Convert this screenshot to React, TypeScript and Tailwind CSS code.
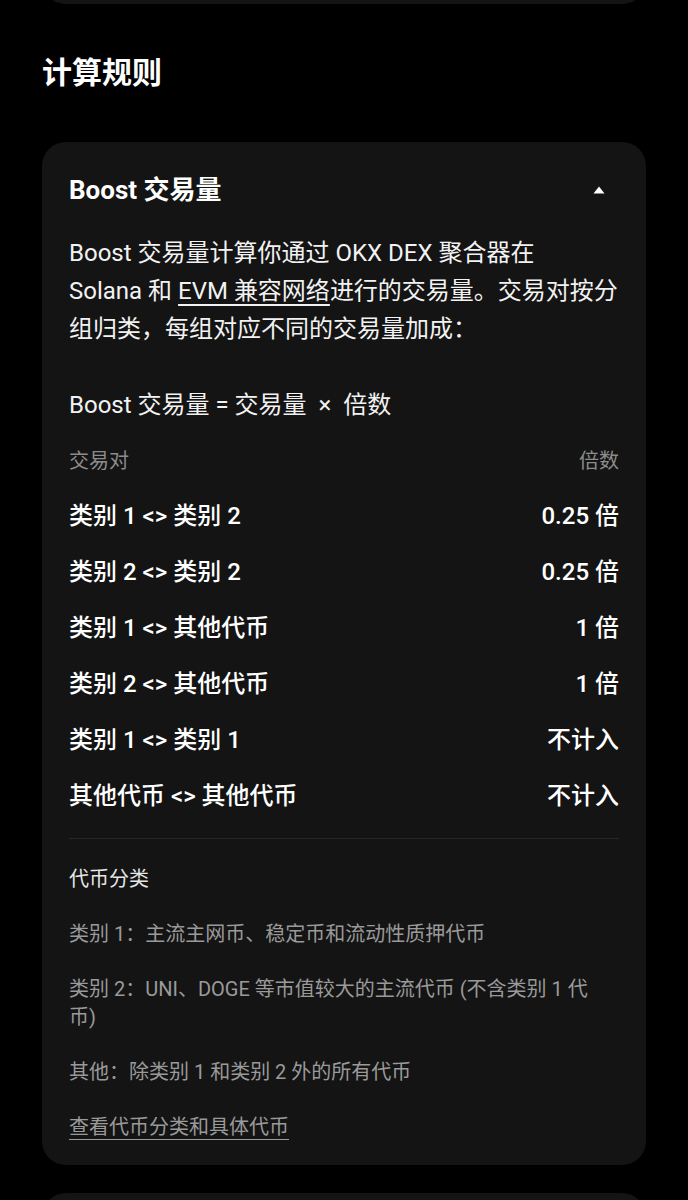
import React from "react";

const rows: [string, string][] = [
  ["类别 1 <> 类别 2", "0.25 倍"],
  ["类别 2 <> 类别 2", "0.25 倍"],
  ["类别 1 <> 其他代币", "1 倍"],
  ["类别 2 <> 其他代币", "1 倍"],
  ["类别 1 <> 类别 1", "不计入"],
  ["其他代币 <> 其他代币", "不计入"],
];

export default function App() {
  return (
    <div
      className="min-h-[1200px] w-[688px] bg-black text-white overflow-hidden"
      style={{ fontFamily: 'Roboto, "Noto Sans CJK SC", sans-serif' }}
    >
      <div className="mx-[42px] -mt-[40px] h-[44px] rounded-b-[24px] bg-[#141414]" />
      <h2 className="mx-[42px] mt-[49px] text-[30px] font-bold leading-[40px]">计算规则</h2>
      <div className="mx-[42px] mt-[49px] rounded-[24px] bg-[#141414] px-[27px] pt-[30px] pb-[24px]">
        <div className="flex items-center justify-between h-[36px]">
          <div className="text-[26px] font-bold leading-[36px]">Boost 交易量</div>
          <svg width="12" height="8" viewBox="0 0 12 8" className="mr-[14px]">
            <path d="M6 0.5 L11.5 7.5 L0.5 7.5 Z" fill="#ffffff" />
          </svg>
        </div>
        <p className="mt-[26px] text-[24px] leading-[38px] text-[#f2f2f2]">
          Boost 交易量计算你通过 OKX DEX 聚合器在
          <br />
          Solana 和{" "}
          <span className="underline decoration-[1.5px] underline-offset-[5px]">EVM 兼容网络</span>
          进行的交易量。交易对按分
          <br />
          组归类，每组对应不同的交易量加成：
        </p>
        <p className="mt-[38px] text-[24px] leading-[38px] text-[#f2f2f2]">
          Boost 交易量 = 交易量 &nbsp;×&nbsp; 倍数
        </p>
        <div className="mt-[23px] flex justify-between text-[20px] leading-[28px] text-[#8c8c8c]">
          <span>交易对</span>
          <span>倍数</span>
        </div>
        <div className="mt-[13px] flex flex-col">
          {rows.map(([a, b]) => (
            <div key={a} className="flex h-[56px] items-center justify-between text-[24px] font-medium">
              <span>{a}</span>
              <span>{b}</span>
            </div>
          ))}
        </div>
        <div className="mt-[14px] h-px bg-[#262626]" />
        <div className="mt-[26px] flex flex-col gap-[27px] text-[20px] leading-[28px]">
          <div className="text-[#e6e6e6]">代币分类</div>
          <div className="text-[#9a9a9a]">类别 1：主流主网币、稳定币和流动性质押代币</div>
          <div className="text-[#9a9a9a]">
            类别 2：UNI、DOGE 等市值较大的主流代币 (不含类别 1 代
            <br />
            币)
          </div>
          <div className="text-[#9a9a9a]">其他：除类别 1 和类别 2 外的所有代币</div>
          <div className="text-[#9a9a9a] underline decoration-1 underline-offset-[5px]">查看代币分类和具体代币</div>
        </div>
      </div>
      <div className="mx-[42px] mt-[28px] h-[60px] rounded-t-[24px] bg-[#141414]" />
    </div>
  );
}
